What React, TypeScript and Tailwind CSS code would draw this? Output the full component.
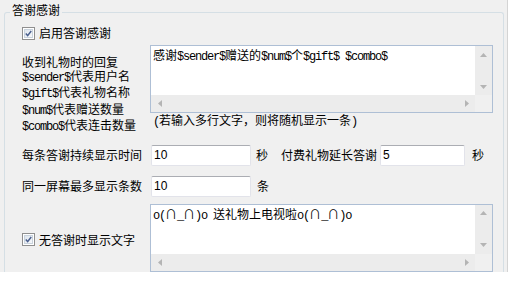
import React from "react";

const M = ({ children }: { children: React.ReactNode }) => (
  <span className="font-['Liberation_Mono'] tracking-[-1.2px]">{children}</span>
);

const Arrow = ({ dir }: { dir: "up" | "down" | "left" | "right" }) => {
  const pts =
    dir === "up"
      ? "0,4 3.5,0 7,4"
      : dir === "down"
      ? "0,0 3.5,4 7,0"
      : dir === "left"
      ? "4,0 0,3.5 4,7"
      : "0,0 4,3.5 0,7";
  const w = dir === "up" || dir === "down" ? 7 : 4;
  const h = dir === "up" || dir === "down" ? 4 : 7;
  return (
    <svg width={w} height={h} viewBox={`0 0 ${w} ${h}`}>
      <polygon points={pts} fill="#b4b4b4" />
    </svg>
  );
};

const CheckBox = () => (
  <div className="w-[13px] h-[13px] border border-[#8f8f8f] bg-white p-[1px] shrink-0">
    <div className="w-full h-full border border-[#c9d3dd] bg-gradient-to-br from-[#dfe6ee] to-[#f6f8fb] flex items-center justify-center">
      <svg width="9" height="9" viewBox="0 0 9 9">
        <path d="M1 4.6 L3.4 7.2 L8 1.2" stroke="#4a5f8e" strokeWidth="1.9" fill="none" />
      </svg>
    </div>
  </div>
);

const TextArea = ({ children }: { children: React.ReactNode }) => (
  <div className="w-[343px] h-[68px] border border-[#aebfd5] bg-white flex flex-col">
    <div className="flex h-[49px]">
      <div className="flex-1 pl-[2px] pt-[1px] leading-[16px] whitespace-nowrap overflow-hidden">
        {children}
      </div>
      <div className="w-[17px] bg-[#ececec] flex flex-col justify-between">
        <div className="h-[17px] flex items-center justify-center">
          <Arrow dir="up" />
        </div>
        <div className="h-[17px] flex items-center justify-center">
          <Arrow dir="down" />
        </div>
      </div>
    </div>
    <div className="flex h-[17px]">
      <div className="flex-1 bg-[#ececec] flex justify-between">
        <div className="w-[17px] flex items-center justify-center">
          <Arrow dir="left" />
        </div>
        <div className="w-[17px] flex items-center justify-center">
          <Arrow dir="right" />
        </div>
      </div>
      <div className="w-[17px] bg-[#f0f0f0]" />
    </div>
  </div>
);

const Input = ({ value, w }: { value: string; w: string }) => (
  <div
    className={`${w} h-[21px] rounded-[2px] border border-[#e2e3ea] border-t-[#abadb3] bg-white pl-[2px] flex items-center font-['Liberation_Sans'] text-[12px]`}
  >
    {value}
  </div>
);

const Hint = () => (
  <div className="pl-[3px] leading-[14px] whitespace-nowrap">
    <M>(</M>若输入多行文字，则将随机显示一条<M>)</M>
  </div>
);

export default function App() {
  return (
    <div className="w-[511px] h-[282px] bg-white overflow-hidden font-['Noto_Sans_CJK_SC',sans-serif] text-[12px] text-black">
      <div className="w-[508px] h-[272px] bg-[#f0f0f0] border-r border-[#d4d4d4] pt-[12px] pl-[4px] overflow-hidden">
        <div className="relative w-[500px] h-[300px] border-l border-t border-r border-[#d5dfe5] rounded-t-[3px] pl-[17px]">
          <div className="absolute -top-[11px] left-[5px] px-[2px] bg-[#f0f0f0] leading-[16px]">答谢感谢</div>

          <div className="mt-[12px] h-[16px] flex items-center gap-[4px]">
            <CheckBox />
            <span className="leading-[16px]">启用答谢感谢</span>
          </div>

          <div className="mt-[4px] flex">
            <div className="w-[128px] pt-[10px] leading-[13.5px] whitespace-nowrap">
              <div>收到礼物时的回复</div>
              <div>
                <M>$sender$</M>代表用户名
              </div>
              <div>
                <M>$gift$</M>代表礼物名称
              </div>
              <div>
                <M>$num$</M>代表赠送数量
              </div>
              <div>
                <M>$combo$</M>代表连击数量
              </div>
            </div>
            <div>
              <TextArea>
                感谢<M>$sender$</M>赠送的<M>$num$</M>个<M>$gift$ $combo$</M>
              </TextArea>
              <Hint />
            </div>
          </div>

          <div className="mt-[10px] h-[21px] flex items-center whitespace-nowrap">
            <div className="w-[129px]">每条答谢持续显示时间</div>
            <Input value="10" w="w-[100px]" />
            <span className="ml-[5px]">秒</span>
            <span className="ml-[13px]">付费礼物延长答谢</span>
            <div className="ml-[3px]">
              <Input value="5" w="w-[85px]" />
            </div>
            <span className="ml-[7px]">秒</span>
          </div>

          <div className="mt-[10px] h-[21px] flex items-center whitespace-nowrap">
            <div className="w-[129px]">同一屏幕最多显示条数</div>
            <Input value="10" w="w-[100px]" />
            <span className="ml-[6px]">条</span>
          </div>

          <div className="mt-[7px] flex">
            <div className="w-[128px] pt-[28px]">
              <div className="h-[16px] flex items-center gap-[4px]">
                <CheckBox />
                <span className="leading-[16px] whitespace-nowrap">无答谢时显示文字</span>
              </div>
            </div>
            <div>
              <TextArea>
                <M>o(</M>∩<M>_</M>∩<M>)o </M>送礼物上电视啦<M>o(</M>∩<M>_</M>∩<M>)o</M>
              </TextArea>
              <Hint />
            </div>
          </div>
        </div>
      </div>
    </div>
  );
}
